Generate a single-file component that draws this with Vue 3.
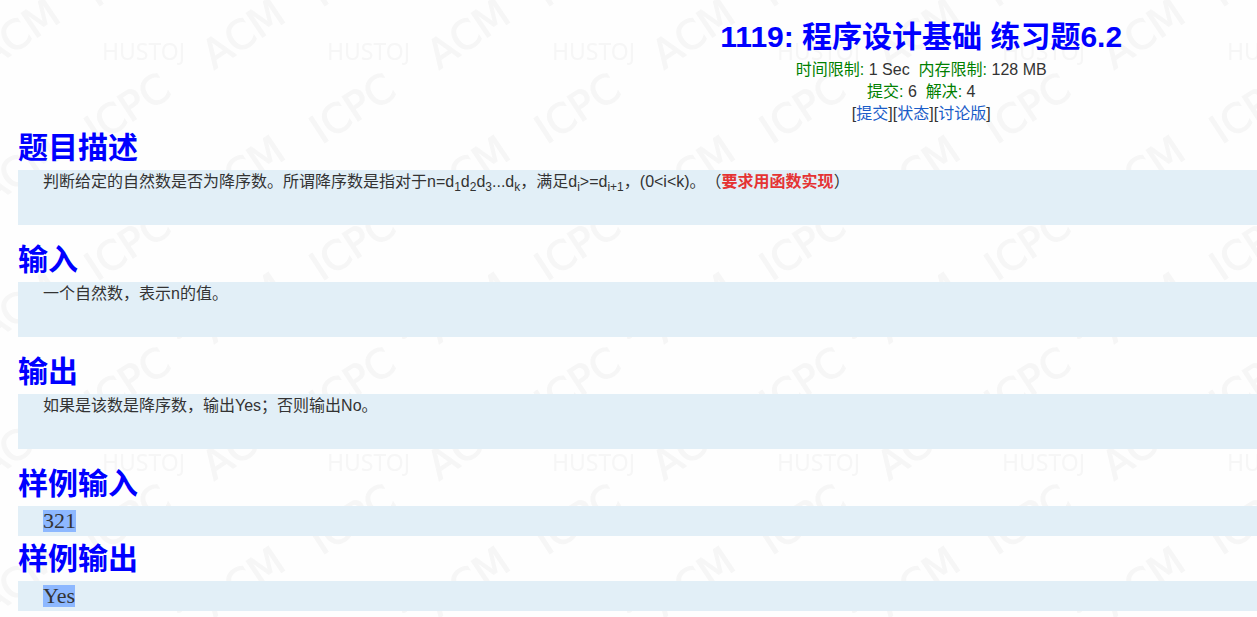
<template>
  <div class="page">
    <!-- Tiled background watermark -->
    <svg class="watermark" aria-hidden="true">
      <defs>
        <pattern id="tile" x="-30" y="0" width="225" height="137" patternUnits="userSpaceOnUse">
          <text class="mark" text-anchor="middle" transform="translate(56 45) rotate(-34)">ACM</text>
          <text class="mark" text-anchor="middle" transform="translate(56 182) rotate(-34)">ACM</text>
          <text class="mark" text-anchor="middle" transform="translate(165 120) rotate(-33)">ICPC</text>
          <text class="mark" text-anchor="middle" transform="translate(165 -17) rotate(-33)">ICPC</text>
          <text class="brand" x="132" y="60">HUSTOJ</text>
        </pattern>
      </defs>
      <rect width="100%" height="100%" fill="url(#tile)" />
    </svg>

    <main class="problem">
      <header class="problem-header">
        <h1 class="title">{{ problem.id }}: {{ problem.title }}</h1>
        <div>
          <span class="label">时间限制: </span>{{ problem.time }}&nbsp;
          <span class="label">内存限制: </span>{{ problem.memory }}
        </div>
        <div>
          <span class="label">提交: </span>{{ problem.submit }}&nbsp;
          <span class="label">解决: </span>{{ problem.solved }}
        </div>
        <nav>
          <template v-for="link in links" :key="link.text">[<a :href="link.href">{{ link.text }}</a>]</template>
        </nav>
      </header>

      <section>
        <h2 class="title">题目描述</h2>
        <div class="content">
          <p>
            判断给定的自然数是否为降序数。所谓降序数是指对于n=d<sub>1</sub>d<sub>2</sub>d<sub>3</sub>...d<sub>k</sub>，满足d<sub>i</sub>&gt;=d<sub>i+1</sub>，(0&lt;i&lt;k)。（<strong>要求用函数实现</strong>）
          </p>
        </div>
      </section>

      <section>
        <h2 class="title">输入</h2>
        <div class="content">
          <p>一个自然数，表示n的值。</p>
        </div>
      </section>

      <section>
        <h2 class="title">输出</h2>
        <div class="content">
          <p>如果是该数是降序数，输出Yes；否则输出No。</p>
        </div>
      </section>

      <section v-for="sample in samples" :key="sample.title">
        <h2 class="title">{{ sample.title }}</h2>
        <pre class="sample"><span class="sampledata">{{ sample.data }}</span></pre>
      </section>
    </main>
  </div>
</template>

<script setup>
const problem = {
  id: 1119,
  title: '程序设计基础 练习题6.2',
  time: '1 Sec',
  memory: '128 MB',
  submit: 6,
  solved: 4
}

const links = [
  { text: '提交', href: '#submit' },
  { text: '状态', href: '#status' },
  { text: '讨论版', href: '#bbs' }
]

const samples = [
  { title: '样例输入', data: '321' },
  { title: '样例输出', data: 'Yes' }
]
</script>

<style>
body {
  margin: 0;
  background: #fefefe;
}
</style>

<style scoped>
.page {
  position: relative;
  min-height: 100vh;
  overflow: hidden;
  font-family: "Liberation Sans", "Noto Sans CJK SC", sans-serif;
  font-size: 16px;
  line-height: 22px;
  color: #333;
  text-spacing-trim: space-all;
}

.watermark {
  position: absolute;
  inset: 0;
  width: 100%;
  height: 100%;
}

.mark {
  font-family: "DejaVu Sans", sans-serif;
  font-size: 40px;
  fill: #f6f6f6;
  stroke: #f6f6f6;
  stroke-width: 1px;
}

.brand {
  font-family: "Noto Sans", sans-serif;
  font-size: 23px;
  fill: #f6f6f6;
}

.problem {
  position: relative;
  padding: 14px 0 0 18px;
}

.problem-header {
  margin-left: calc(50% - 52px);
  text-align: center;
}

.title {
  margin: 0;
  font-size: 30px;
  line-height: 45px;
  font-weight: bold;
  color: #00f;
}

.label {
  color: green;
}

a {
  color: #1a5cc8;
  text-decoration: none;
}

.content {
  min-height: 55px;
  margin-bottom: 12px;
  padding-left: 25px;
  background: #e2eff7;
}

.content p {
  margin: 0;
  line-height: 24px;
}

.content strong {
  color: #e53333;
}

sub {
  position: relative;
  bottom: -4px;
  font-size: 12px;
  line-height: 0;
  vertical-align: baseline;
}

.sample {
  margin: 0;
  padding: 4px 25px;
  background: #e2eff7;
  font-family: "Liberation Serif", serif;
  font-size: 22px;
  line-height: 22px;
}

.sampledata {
  display: inline-block;
  background: #8db8ff;
}
</style>
